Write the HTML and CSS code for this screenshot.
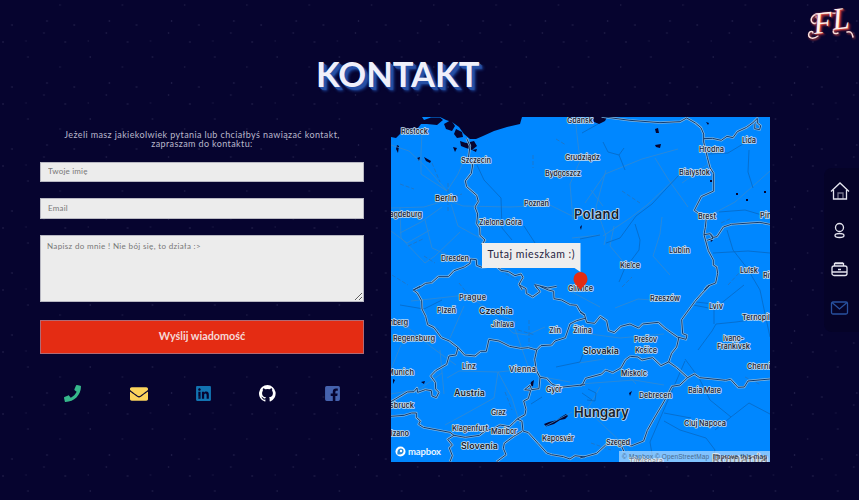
FILE: index.html
```html
<!DOCTYPE html>
<html lang="pl">
<head>
<meta charset="utf-8">
<title>Kontakt</title>
<link rel="stylesheet" href="styles.css">
</head>
<body>
<div class="logo">
  <svg class="swash" width="50" height="38" viewBox="0 0 50 38">
    <path d="M16 13C9 8 3 17 8 20c4 2 6-3 4-5M13 33C8 37 2 35 4 30c1-2 4-2 4 0M11 14C17 8 25 11 31 10M42 29c3-1 5 0 6 5M30 26c-3 2-2 6 3 4"/>
  </svg>
  <span class="logo-f">F</span><span class="logo-l">L</span>
</div>
<main class="page">
  <h1 class="title">KONTAKT</h1>
  <div class="columns">
    <section class="contact">
      <p class="intro">Jeżeli masz jakiekolwiek pytania lub chciałbyś nawiązać kontakt,<br>zapraszam do kontaktu:</p>
      <form class="form">
        <input class="field" type="text" placeholder="Twoje imię">
        <input class="field" type="text" placeholder="Email">
        <textarea class="field area" placeholder="Napisz do mnie ! Nie bój się, to działa :&gt;"></textarea>
        <button class="send" type="button">Wyślij wiadomość</button>
      </form>
      <div class="social">
        <svg width="17" height="17" viewBox="0 0 512 512" fill="#36b78b"><path d="M493.4 24.6l-104-24c-11.300-2.600-22.900 3.300-27.500 13.900l-48 112c-4.200 9.800-1.400 21.300 6.900 28l60.600 49.600c-36 76.700-98.900 140.500-177.200 177.200l-49.600-60.600c-6.800-8.300-18.200-11.100-28-6.900l-112 48C3.900 366.500-2 378.100.6 389.400l24 104C27.100 504.200 36.700 512 48 512c256.100 0 464-207.500 464-464 0-11.200-7.700-20.900-18.600-23.400z"/></svg>
        <svg width="18" height="18" viewBox="0 0 512 512" fill="#fbd45c"><path d="M502.300 190.800c3.900-3.100 9.700-.2 9.700 4.700V400c0 26.500-21.500 48-48 48H48c-26.500 0-48-21.500-48-48V195.600c0-5 5.700-7.800 9.700-4.700 22.400 17.400 52.100 39.500 154.100 113.600 21.100 15.400 56.700 47.800 92.200 47.600 35.700.3 72-32.800 92.300-47.600 102-74.100 131.600-96.300 154-113.700zM256 320c23.200.4 56.600-29.200 73.400-41.400 132.700-96.300 142.800-104.700 173.400-128.700 5.800-4.500 9.200-11.500 9.200-18.900v-19c0-26.500-21.500-48-48-48H48c-26.500 0-48 21.500-48 48v19c0 7.400 3.400 14.300 9.200 18.900 30.600 23.900 40.700 32.400 173.400 128.700 16.800 12.200 50.200 41.800 73.400 41.400z"/></svg>
        <svg width="15" height="17" viewBox="0 0 448 512" fill="#1273b1"><path d="M416 32H31.900C14.300 32 0 46.500 0 64.300v383.400C0 465.500 14.300 480 31.900 480H416c17.600 0 32-14.500 32-32.300V64.300c0-17.800-14.400-32.300-32-32.300zM135.400 416H69V202.200h66.500V416zm-33.200-243c-21.300 0-38.500-17.300-38.500-38.500S80.900 96 102.200 96c21.200 0 38.500 17.300 38.500 38.500 0 21.300-17.200 38.500-38.500 38.500zm282.100 243h-66.400V312c0-24.800-.5-56.700-34.500-56.700-34.600 0-39.900 27-39.900 54.900V416h-66.400V202.200h63.700v29.200h.9c8.900-16.800 30.600-34.500 62.900-34.500 67.200 0 79.700 44.300 79.700 101.900V416z"/></svg>
        <svg width="17" height="17" viewBox="0 0 16 16" fill="#fff"><path d="M8 0a8 8 0 0 0-2.530 15.590c.4.070.55-.17.55-.38l-.01-1.490C3.780 14.210 3.310 12.650 3.310 12.650c-.36-.92-.89-1.170-.89-1.170-.73-.5.060-.49.060-.49.800.060 1.230.82 1.230.82.71 1.220 1.870.87 2.330.66.070-.52.280-.87.500-1.070-1.770-.2-3.640-.89-3.640-3.950 0-.87.310-1.590.82-2.150-.08-.2-.36-1.020.080-2.120 0 0 .67-.21 2.200.82a7.400 7.400 0 0 1 4 0c1.530-1.040 2.200-.82 2.200-.82.440 1.100.16 1.920.080 2.120.51.560.82 1.270.82 2.150 0 3.070-1.870 3.750-3.650 3.950.290.250.540.730.540 1.480l-.01 2.200c0 .21.150.46.550.38A8 8 0 0 0 8 0z"/></svg>
        <svg width="15" height="17" viewBox="0 0 448 512" fill="#4562ad"><path d="M400 32H48A48 48 0 0 0 0 80v352a48 48 0 0 0 48 48h185V328h-63v-72h63v-55c0-63 37-97 94-97 27 0 56 5 56 5v62h-32c-31 0-41 19-41 39v46h69l-11 72h-58v152h90a48 48 0 0 0 48-48V80a48 48 0 0 0-48-48z"/></svg>
      </div>
    </section>
    <section class="map">
      <svg class="map-canvas" viewBox="391 117 379 345" width="379" height="345">
        <defs>
          <g id="borders">
            <path transform="translate(385 110) scale(.33333)" d="M245 85L255 108L250 145L263 165L259 190L241 213L245 230L275 256L280 275L270 291L278 312L275 341L284 354L285 376L300 390L290 405M85 540L105 531L122 520L140 518L160 500L190 500L207 482L238 471L255 460L257 447L274 449L275 466L291 472L333 468L348 481L371 485L390 497L408 492L414 502L402 523L412 540M449 524L488 534L515 529M449 524L457 536"/>
            <path transform="translate(580 110) scale(.33333)" d="M65 20L150 31L240 38L300 35L320 24L346 39L363 53L371 72L371 96L382 142L390 173L401 190L401 243L364 260L343 301L355 309L380 315L376 352L372 374L385 422L400 450L400 465L410 471L413 490L407 519L383 528L373 540M371 86L397 85L424 91L441 79L459 83L472 65L500 52L519 38L532 25L532 39L542 47L539 59L524 56L525 41M372 374L391 371L400 382L411 380L430 351L454 343L510 339L540 337L570 343M391 373L399 385L381 391"/>
            <path transform="translate(385 285) scale(.33333)" d="M85 15L97 24L110 47L111 72L122 94L128 119L147 128L169 158L193 168L219 188L239 210L270 213L287 199L304 199L312 163L342 168L374 184L407 190L430 188L455 195L468 182L500 180L510 168L541 158L555 117L575 107L600 100M85 15L105 4M403 0L423 11L424 25L443 36L465 20L453 4M465 4L490 15L506 19L507 41L530 45L556 59L575 61L585 79L600 90M219 188L213 210L192 213L185 238L152 257L137 273L151 292L152 312L162 322L154 338L141 333L139 317L121 314L98 322L96 309L87 320L67 321L32 342L18 350M18 394L57 391L80 384L94 384L94 397L106 408L101 418L115 427L195 442L207 451L241 457L283 451L300 438L328 430L345 420L373 425L386 413L397 402L420 389L423 373L416 348L430 341L437 316L419 314L435 301L440 314L462 311L465 277L454 256L449 223L455 195M465 277L485 280L500 297L526 307L600 299M397 402L411 409L414 438L430 443L459 475L485 504L500 509L535 515L555 522L570 512L600 516M411 439L386 454L358 475L355 490L363 509L335 530M207 451L188 463L202 480L193 489L202 512L195 530"/>
            <path transform="translate(580 285) scale(.33333)" d="M0 81L14 91L20 112L44 115L61 94L80 107L86 137L103 143L123 124L150 117L176 129L188 117L235 112L255 130L292 156L318 163L321 151L308 146L305 104L345 49L365 26L390 0M297 156L290 186L275 205L266 231L243 242L218 218L186 225L174 216L151 214L137 224L123 249L98 263L77 255L65 267L17 280L8 298L0 303M266 231L290 248L323 278L343 267L359 278L437 286L452 283L474 307L493 306L504 288L570 282M323 278L300 300L276 304L252 350L223 399L202 436L191 468L153 483L135 473L77 480L50 505L0 519M123 480L132 500"/>
          </g>
        </defs>
        <rect x="391" y="117" width="379" height="345" fill="#0087ff"/>
        <!-- sea and lakes -->
        <g fill="#06042f">
          <path d="M391 117H422L424 120L431 117.500H440L443 120L437 125L427 124L421 124L418 128L410 130L401 133L396 138L391 137Z"/>
          <path d="M440 117H522L520 124L507 127L494 131L483 136L476 139L470 139L464 134L459 127L452 122L446 120Z"/>
          <path d="M444 124L451 120L455 126L452 131L446 129ZM456 129L462 132L463 137L457 138L454 134ZM460 141L466 143L474 141L477 146L472 150L466 148L461 146ZM472 150L477 149L476 152ZM424 157L431 161L430 163L426 161ZM397 145L399 146L398 153L396 149ZM417 158L420 157L419 161ZM453 147L457 148L455 152Z"/>
          <path d="M593 117H607L605 121L599 124L594 122ZM655 129L658 128L659 133L656 133ZM655 145L661 144L660 148L656 147ZM706 122L709 123L708 125ZM544 424L549 422L557 420L561 417L566 414L568 416L565 419L560 420L554 424L546 426.500ZM531 382L534 380L533 386L530 387ZM421 382L425 381L424 384ZM393 379L395 380L393 384ZM736 193L738 193L738 195L736 195ZM746 199H748V201H746ZM764 191H766V193H764ZM710 180H712V182H710ZM710 239L713 240L711 242ZM629 393L632 391L630 396ZM580 227L582 225L581 230Z"/>
        </g>
        <!-- roads and rivers -->
        <g class="roads">
          <path d="M391 145L409 151L426 167L447 191M422 133L421 153L421 174M421 174L447 191L458 174L464 160M447 200L424 207L391 208M447 200L463 206L510 207L550 205L574 217M451 204L458 226L480 238M442 207L421 222L400 233M400 208L401 238L425 263L435 256L460 232M425 220L432 248L450 256M391 231L407 243L430 230M575 117L580 161L570 184L573 220M605 174L585 203M605 174L642 159L678 149M606 170L596 207L606 236L604 245M655 158L668 179L688 207M591 190L603 206M614 226L610 246L626 265M662 217L660 234L653 256L670 275M682 183L708 164M770 171L735 202L705 218M603 236L630 218L647 205L679 175M572 238L600 235"/>
          <path d="M391 319L410 329L430 346L456 365M401 345L391 369M411 301L430 299L466 295L490 310L516 322M464 306L450 338M490 311L513 333L527 335L545 327M447 378L459 371L498 372L529 369M498 372L494 398L467 413L445 425M498 372L512 398L520 424M515 329L522 349L529 369M391 394L420 389L442 373M440 350L444 394M570 291L600 307M615 308L638 299L680 302M582 333L620 338L664 334M579 363L604 359M529 370L543 377L570 382M600 387L584 415M580 404L602 424L624 445L635 461M572 412L544 427M636 384L623 370M580 384L634 380L664 385"/>
        </g>
        <g class="rivers">
          <path d="M477 165L484 180L501 198L502 228L512 240M524 226L535 243M580 239L600 235M603 142L608 152L619 155L625 170M619 155L624 148M582 133L598 124M606 243L620 238L636 216L652 204L679 175M635 224L640 240L639 250L624 270L619 282M749 150L748 172L753 188M708 154L728 153L748 141M719 212L745 210L762 215M727 230L733 250L747 268L760 290L764 309L770 337M713 253L748 251L770 253M693 305L714 309L744 285M664 421L680 430L706 438L715 450L711 462M698 350L712 331L716 324L736 322L770 317M696 302L714 304V324M685 359L699 378L710 400L731 417L749 403L770 414M685 361L665 407L650 442L653 460M664 413L691 418M731 417L715 430M400 305L424 309L442 300M556 367L580 362L583 354M531 404L542 397M582 393L592 400M588 389L596 393L595 401L587 400"/>
        </g>
        <!-- small streets around towns -->
        <g class="specks">
          <path d="M448 183V212M440 194L456 203M437 201L462 194M432 163L440 182M400 184L414 189M424 256L435 263M459 283L471 298M529 320V345M518 330L535 335M426 321L439 330M408 246L423 239M392 275L408 285M500 271L518 280M622 191L640 203M721 223L732 218M622 287L632 277M728 285L740 272M745 377L761 385M591 443L611 450M505 392L512 410M533 155V168M556 139L566 145"/>
        </g>
        <use href="#borders" class="halo"/>
        <use href="#borders" class="line"/>
        <g class="city">
          <text x="401" y="134" textLength="27">Rostock</text>
          <text x="461" y="162.500" textLength="30">Szczecin</text>
          <text x="567" y="123" textLength="26">Gdansk</text>
          <text x="565" y="160" textLength="35">Grudziądz</text>
          <text x="545" y="175.500" textLength="36">Bydgoszcz</text>
          <text x="524" y="205.500" textLength="25">Poznań</text>
          <text x="479" y="225" textLength="43">Zielona Góra</text>
          <text x="441" y="261" textLength="28">Dresden</text>
          <text x="383" y="217" textLength="39">Magdeburg</text>
          <text x="699" y="152" textLength="25">Hrodna</text>
          <text x="742" y="143" textLength="14">Lida</text>
          <text x="679" y="175" textLength="31">Białystok</text>
          <text x="698" y="218.500" textLength="18">Brest</text>
          <text x="760" y="218" textLength="20">Pinsk</text>
          <text x="669" y="253" textLength="21">Lublin</text>
          <text x="620" y="268" textLength="20">Kielce</text>
          <text x="740" y="273" textLength="18">Lutsk</text>
          <text x="763" y="278" textLength="19">Rivne</text>
          <text x="568" y="291" textLength="25">Gliwice</text>
          <text x="459" y="299.500" textLength="27">Prague</text>
          <text x="437" y="313" textLength="19">Plzeň</text>
          <text x="491" y="326.500" textLength="23">Jihlava</text>
          <text x="377" y="324.500" textLength="31">Nürnberg</text>
          <text x="393" y="341" textLength="42">Regensburg</text>
          <text x="549" y="333" textLength="12">Zlín</text>
          <text x="573" y="333" textLength="19">Žilina</text>
          <text x="462" y="368.500" textLength="14">Linz</text>
          <text x="509" y="372" textLength="27">Vienna</text>
          <text x="387" y="375" textLength="27">Munich</text>
          <text x="379" y="408" textLength="35">Innsbruck</text>
          <text x="546" y="392" textLength="16">Győr</text>
          <text x="491" y="415" textLength="15">Graz</text>
          <text x="452" y="431" textLength="36">Klagenfurt</text>
          <text x="491" y="434" textLength="26">Maribor</text>
          <text x="542" y="441" textLength="32">Kaposvár</text>
          <text x="382" y="436" textLength="27">Bolzano</text>
          <text x="650" y="301" textLength="30">Rzeszów</text>
          <text x="709" y="309" textLength="14">Lviv</text>
          <text x="742" y="320" textLength="28">Ternopil</text>
          <text x="723" y="340.500" textLength="21">Ivano-</text>
          <text x="717" y="348.500" textLength="33">Frankivsk</text>
          <text x="634" y="341.500" textLength="23">Prešov</text>
          <text x="635" y="352.500" textLength="22">Košice</text>
          <text x="621" y="376" textLength="26">Miskolc</text>
          <text x="639" y="397.500" textLength="33">Debrecen</text>
          <text x="747" y="369" textLength="36">Chernivtsi</text>
          <text x="688" y="393" textLength="33">Baia Mare</text>
          <text x="684" y="426" textLength="42">Cluj Napoca</text>
          <text x="606" y="445" textLength="24">Szeged</text>
          <text x="629" y="464" textLength="34">Timișoara</text>
        </g>
        <g class="country">
          <text class="berlin" x="435" y="201" textLength="22">Berlin</text>
          <text x="479" y="313.500" textLength="34">Czechia</text>
          <text x="454" y="395.500" textLength="31">Austria</text>
          <text x="461" y="448.500" textLength="37">Slovenia</text>
          <text x="583" y="353.500" textLength="36">Slovakia</text>
          <text class="large" x="574" y="219" textLength="45">Poland</text>
          <text class="large" x="574" y="417" textLength="55">Hungary</text>
          <text class="large" x="712" y="464" textLength="56">Romania</text>
        </g>
        <rect x="619" y="451" width="151" height="11" fill="#fff" opacity=".5"/>
        <g class="credits">
          <text x="622" y="459" textLength="31">© Mapbox</text>
          <text x="655" y="459" textLength="54">© OpenStreetMap</text>
          <text class="improve" x="713" y="459" textLength="54">Improve this map</text>
        </g>
        <circle cx="400.500" cy="451.500" r="5" fill="#fff"/>
        <path d="M397.500 454.500c-.5-4 1-6 3.500-6 3.500 0 3.500 5 .2 5.700-1 .3-2.500.4-3.700.3z" fill="#268bdc"/>
        <circle cx="401" cy="451" r="1.200" fill="#fff"/>
        <text class="brand" x="408" y="455" textLength="33">mapbox</text>
        <path d="M580.500 272a7 7 0 0 1 7 7c0 5-4.500 7-7 11-2.500-4-7-6-7-11a7 7 0 0 1 7-7z" fill="#e42c13"/>
        <path d="M482 243h98.500v29l-6-4H482z" fill="#eee"/>
        <text class="tip" x="487.500" y="257.500" textLength="87">Tutaj mieszkam :)</text>
      </svg>
    </section>
  </div>
</main>
<nav class="side">
  <svg width="20" height="20" viewBox="0 0 20 20"><path d="M1 10.500L10 2l9 8.500M3.500 9v9h13V9"/><path d="M8 18v-6h5v6" opacity=".5"/></svg>
  <svg width="20" height="20" viewBox="0 0 20 20"><circle cx="9.500" cy="7.500" r="4"/><ellipse cx="9.500" cy="15.500" rx="4.500" ry="2"/></svg>
  <svg width="20" height="20" viewBox="0 0 20 20"><path d="M4.500 7V4.500h9V7M5 4h8"/><rect x="2" y="7" width="15" height="9.500" rx="2"/><path d="M2 13h15M8 10.500h3"/></svg>
  <svg class="active" width="20" height="20" viewBox="0 0 20 20"><rect x="1.500" y="4" width="16" height="12" rx="1.500"/><path d="M2 4.500l7.500 6.500 7.500-6.500"/></svg>
</nav>
</body>
</html>
```

FILE: styles.css
```css
* { box-sizing: border-box; }
body {
  margin: 0;
  height: 500px;
  overflow: hidden;
  font-family: Lato, sans-serif;
  color: #b9b8cb;
  background-color: #06042f;
  background-image:
    radial-gradient(circle at 12px 25px, #2b2953 0, transparent 1.2px),
    radial-gradient(circle at 60px 5px, #24224c 0, transparent 1.2px),
    radial-gradient(circle at 47px 21px, #2f2d59 0, transparent 1.2px),
    radial-gradient(circle at 44px 33px, #2b2953 0, transparent 1.2px),
    radial-gradient(circle at 3px 42px, #2b2953 0, transparent 1.2px),
    radial-gradient(circle at 26px 41px, #1d1b45 0, transparent 1.2px),
    radial-gradient(circle at 28px 57px, #2b2953 0, transparent 1.2px);
  background-size: 62.3px 62px;
}
.page { padding: 55px 0 0 40px; }
.title {
  margin: 0;
  width: 717px;
  height: 62px;
  padding-left: 276px;
  font-size: 34.5px;
  line-height: 38px;
  font-weight: 700;
  color: #f0f0fa;
  white-space: nowrap;
  text-shadow: 1px 1px 0 #2750a5, 2px 2px 0 #2750a5, 3px 3px 1px #2750a5, 4px 4px 3px #1c4296;
}
.columns { display: flex; gap: 27px; align-items: flex-start; }
.contact { width: 324px; padding-top: 12.5px; }
.intro {
  margin: 0 0 14px;
  font-size: 9px;
  line-height: 9px;
  letter-spacing: .38px;
  text-align: center;
  white-space: nowrap;
}
.form { display: flex; flex-direction: column; gap: 16px; }
.field {
  display: block;
  width: 100%;
  height: 20.5px;
  margin: 0;
  padding: 0 7px 1px;
  border: 1px solid #b8b8c2;
  border-radius: 0;
  background: #ececec;
  font: 8px Lato, sans-serif;
  letter-spacing: .2px;
}
.field::placeholder { color: #777; }
.area { height: 67px; padding: 5px 6px; letter-spacing: .35px; }
.send {
  height: 34px;
  margin: 2px 0 0;
  padding: 0 0 2px;
  border: 1px solid #b06a75;
  background: #e42c13;
  color: #f5d9d7;
  font: 700 10.8px Lato, sans-serif;
}
.social {
  display: flex;
  justify-content: space-around;
  align-items: center;
  height: 18px;
  margin-top: 31px;
}
.map { width: 379px; height: 345px; }
.map-canvas { display: block; }
.roads, .rivers, .specks, .halo, .line { fill: none; stroke-linejoin: round; }
.roads { stroke: #3589cf; stroke-width: .8; }
.rivers { stroke: #0868c3; stroke-width: .8; }
.specks { stroke: #2870b5; stroke-width: .7; stroke-dasharray: 4 2; }
.halo { stroke: #8ab9df; stroke-width: 7; }
.line { stroke: #103b70; stroke-width: 3; }
.city, .country {
  font-family: Inter, sans-serif;
  font-weight: 600;
  font-size: 7.4px;
  fill: #20293b;
  stroke: #c5dcf0;
  stroke-width: 1.6px;
  stroke-linejoin: round;
  paint-order: stroke;
}
.country { font-size: 9px; fill: #151c2c; }
.country .berlin { font-size: 8px; }
.country .large { font-size: 13px; }
.credits { font: 6.5px "Liberation Sans", sans-serif; fill: #476a8c; }
.credits .improve { fill: #142438; }
.brand { font: 700 9.5px Lato, sans-serif; fill: #e7f4ff; }
.tip { font: 10.5px Lato, sans-serif; fill: #25233f; }
.side {
  position: absolute;
  right: 0;
  top: 168px;
  width: 35px;
  height: 164px;
  padding: 13px 0 0 6px;
  display: flex;
  flex-direction: column;
  gap: 19px;
  border-radius: 8px 0 0 8px;
  background: #050328;
}
.side svg { fill: none; stroke: #e4e4ee; stroke-width: 1.3; }
.side .active { stroke: #28519f; }
.logo {
  position: absolute;
  left: 805px;
  top: 3px;
  width: 50px;
  height: 38px;
  padding-left: 8px;
  display: flex;
  font: italic 400 31px/40px "Liberation Serif", serif;
  color: #fff0ed;
  text-shadow: 1px 1px 1px #db4b43, 2px 2px 2px #852032, -1px 0 2px #852032;
}
.swash {
  position: absolute;
  left: 0;
  top: 0;
  fill: none;
  stroke: #fbe3df;
  stroke-width: 1.5;
  stroke-linecap: round;
  filter: drop-shadow(1px 1px 1px #db4b43);
}
.logo-f, .logo-l { transform: rotate(-6deg); }
.logo-l { position: relative; top: -4px; }
```
